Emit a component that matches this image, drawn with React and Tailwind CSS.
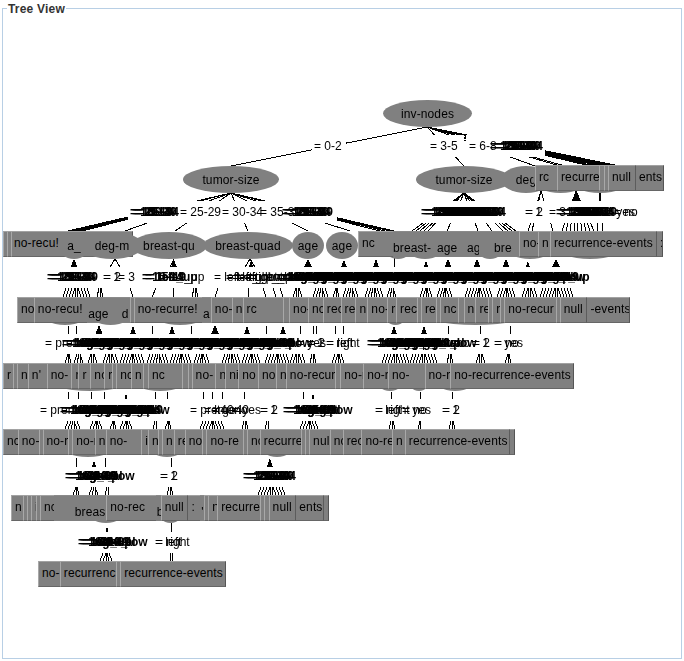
const font = { fontFamily: '"Liberation Sans", Arial, sans-serif' }

// x, text, flags: d = dark divider, e = no border (ellipse showing through), p = left padding
const rows = [
  { y: 165, end: 664, cells: [[535, 'rc'], [557, 'recurre'], [599, ''], [604, ''], [608, 'null'], [635, 'ents', { d: 1 }]] },
  { y: 231, end: 133, cells: [[3, ''], [7, ''], [10, 'no-recu!', { p: 2 }]] },
  {
    y: 297, end: 630,
    cells: [[17, 'no'], [34, 'no-recu!'], [88, 'age', { e: 1 }], [122, 'd', { e: 1 }], [131, ''], [134, 'no-recurre!'], [203, 'a', { e: 1 }], [212, 'no-'], [233, 'n'], [244, 'rc'], [285, ''], [291, 'no-'], [310, 'nc'], [325, 'rec'], [343, 're'], [358, 'n'], [370, 'no-'], [390, 'r'], [399, 'rec'], [420, ''], [424, 're'], [439, ''], [442, 'nc'], [460, ''], [466, 'n'], [478, 're'], [491, ''], [494, 'r'], [502, ''], [505, 'no-recur'], [557, ''], [559, 'null'], [586, '-events', { d: 1 }]],
  },
  {
    y: 363, end: 574,
    cells: [[3, 'r'], [13, ''], [15, 'ni'], [26, "n'"], [45, 'no-'], [70, 'r'], [77, 'r'], [89, 'nc'], [103, 'r'], [111, ''], [113, 'nc'], [128, 'n'], [140, ''], [145, 'nc'], [179, ''], [185, 'i'], [188, 'no-'], [212, 'n'], [222, 'ni'], [235, 'no'], [255, 'no-'], [273, 'n'], [283, 'no-recur'], [333, 'r'], [338, 'no-r'], [361, 'no-r'], [386, 'no-'], [423, 'no-r'], [449, 'no-recurrence-events']],
  },
  {
    y: 429, end: 515,
    cells: [[3, 'nc'], [18, 'no-'], [39, ''], [41, 'no-r'], [67, ''], [71, 'no-r'], [94, 'n'], [105, 'no-'], [141, 'i'], [148, 'n'], [158, ''], [161, 'n'], [173, 're'], [184, 'no'], [202, ''], [204, 'no-re'], [241, 'i'], [244, 'nc'], [257, 'recurre'], [299, ''], [302, ''], [306, 'null'], [327, 'no'], [340, 'rec'], [359, 'no-re'], [390, 'n'], [403, 'recurrence-events'], [509, ':', { d: 1 }]],
  },
  {
    y: 495, end: 329,
    cells: [[11, 'n'], [23, ''], [26, ''], [30, 'i'], [35, ''], [38, 'nc'], [52, 'breas', { e: 1, p: 21 }], [105, 'no-rec'], [155, 'b', { e: 1 }], [160, 'null'], [187, ':', { d: 1 }], [200, "'", { e: 1 }], [204, ''], [208, 'nc'], [217, 'recurre'], [260, ''], [263, ''], [268, 'null'], [295, 'ents', { d: 1 }], [323, '', { d: 1 }]],
  },
  { y: 561, end: 226, cells: [[38, 'no-'], [60, 'recurrenc'], [117, ''], [119, 'recurrence-events']] },
]

// ellipses: cx, y, w, h, text
const backEllipses = [
  [526, 166, 50, 27, 'deg'], [560, 166, 55, 27, ''], [600, 166, 60, 27, ''],
  [65, 297, 50, 28, ''], [110, 297, 45, 28, ''], [180, 297, 60, 28, ''], [395, 297, 25, 28, ''], [475, 297, 115, 28, ''],
  [90, 363, 90, 28, ''], [160, 363, 60, 28, ''], [390, 363, 30, 28, ''], [419, 363, 24, 28, ''], [455, 363, 44, 28, ''],
  [88, 429, 60, 28, ''], [167, 429, 40, 28, ''], [277, 429, 36, 28, ''],
  [106, 495, 40, 28, ''], [170, 495, 27, 28, ''],
  [398, 232, 30, 27, ''], [425, 232, 40, 27, ''], [490, 232, 30, 27, ''], [530, 232, 50, 27, ''], [590, 232, 70, 27, ''],
]

const frontEllipses = [
  [427.5, 100, 89, 27, 'inv-nodes'],
  [231, 166, 96, 27, 'tumor-size'],
  [464, 166, 96, 27, 'tumor-size'],
  [74, 232, 32, 27, 'a_'], [112, 232, 62, 27, 'deg-m'], [169, 232, 76, 27, 'breast-qu'], [248, 232, 90, 27, 'breast-quad'],
  [308, 232, 32, 27, 'age'], [342, 232, 32, 27, 'age'],
]

const rightRow2 = {
  y: 231, end: 663,
  cells: [[358, 'nc'], [393, 'breast-', { e: 1, p: 0 }], [433, 'age', { e: 1, p: 4 }], [463, 'ag', { e: 1, p: 4 }], [479, 'bre', { e: 1, p: 15 }], [519, 'no-'], [538, 'n'], [550, 'recurrence-events'], [656, ':', { d: 1 }]],
}

const fan = (px, py, xs, cy) => xs.map((x) => [px, py, x, cy])

// small fans of wires that come out of a label band
const spread = (x0, x1, y0, y1, step = 3) => {
  const out = []
  const cx = (x0 + x1) / 2
  for (let x = x0; x <= x1; x += step) {
    const lean = Math.max(-3, Math.min(3, (cx - x) * 0.8))
    out.push([Math.round(x + lean), y0, x, y1])
  }
  return out
}

const ticks = (xs, y0, y1) => xs.map((x) => [x, y0, x, y1])

const edges = [
  ...fan(427, 127, [231, 464, 535, 560, 565, 590, 595, 600, 603, 606, 609, 612, 615, 618, 620], 166),
  ...fan(231, 193, [68, 70, 72, 74, 76, 78, 80, 82, 125, 175, 248, 308, 350, 380, 385, 390, 394], 231),
  ...fan(464, 193, [412, 416, 420, 424, 428, 447, 478, 492, 503, 508, 512, 516], 231),
  ...fan(541, 191, [528, 532, 553], 231),
  ...fan(576, 191, [562, 566, 570, 574, 578, 582, 586, 590, 594], 231),
  ...fan(600, 191, [597, 603], 231),
  // row 2 to row 3
  ...[[63, 90], [97, 103], [343, 360], [365, 383], [387, 398], [420, 433], [437, 453], [465, 493], [497, 517], [522, 537], [540, 573], [293, 302], [313, 330], [333, 340], [192, 198]].flatMap(([a, b]) => spread(a, b, 288, 297)),
  [156, 288, 152, 297], [173, 288, 173, 297], [218, 288, 215, 297], [248, 288, 248, 297], [263, 288, 266, 297], [273, 288, 276, 297], [280, 288, 283, 297], [130, 288, 133, 297],
  // row 3 to row 4
  ...ticks([68, 76, 152, 191, 266, 300, 313, 316, 335, 343, 448, 480, 510], 326, 334),
  ...[[65, 72], [74, 85], [88, 97], [103, 118], [120, 145], [147, 170], [170, 192], [194, 210], [222, 240], [242, 262], [265, 290], [290, 305], [310, 316], [332, 345], [382, 409], [410, 437], [447, 453], [476, 485], [505, 512]].flatMap(([a, b]) => spread(a, b, 354, 363)),
  // row 4 to row 5
  ...ticks([68, 78, 91, 104, 155, 167, 203, 212, 222, 244, 303, 391, 420, 452], 392, 399),
  ...[[65, 82], [90, 103], [110, 118], [120, 133], [153, 158], [165, 173], [200, 225], [242, 248], [265, 270], [300, 320], [389, 395], [418, 422], [449, 455]].flatMap(([a, b]) => spread(a, b, 421, 429)),
  // row 5 to row 6
  ...ticks([76, 105, 171], 458, 467),
  ...[[73, 80], [89, 100], [105, 110], [167, 173], [258, 285]].flatMap(([a, b]) => spread(a, b, 487, 495)),
  // row 6 to row 7
  ...ticks([171], 523, 532),
  ...[[100, 113], [170, 173]].flatMap(([a, b]) => spread(a, b, 553, 561)),
  // open heads and single lines under row 2
  [115, 259, 110, 267], [115, 259, 120, 267], [394, 258, 394, 267],
  [174, 259, 170, 267], [250, 259, 245, 267], [250, 259, 255, 267],
]

// x, top, bottom, width
const heads = [
  [74, 259, 267, 7], [174, 260, 267, 6], [251, 261, 267, 5], [308, 259, 267, 8], [344, 260, 267, 6], [376, 259, 267, 6], [426, 261, 267, 5], [448, 259, 267, 7], [477, 259, 267, 7], [506, 259, 267, 7], [528, 261, 267, 4], [556, 259, 267, 8],
  [99, 325, 334, 7], [133, 326, 334, 6], [172, 326, 334, 6], [215, 325, 334, 8], [247, 326, 334, 6], [283, 326, 334, 6], [394, 326, 334, 6], [424, 326, 334, 6],
  [126, 393, 399, 3], [313, 393, 399, 3],
  [94, 460, 467, 4], [270, 458, 467, 6],
  [107, 526, 532, 3],
]

const eq = ['= 10-14', '= 15-19', '= left_up', '= right_low', '= central', '= 40-49', '= 30-39', '= ge40', '= left', '= right']
const nums = ['= 10-14', '= 15-19', '= 20-24', '= 25-29', '= 30-34', '= 35-39', '= 40-44', '= 45-49', '= 50-54']

// a stack of labels drawn over each other, fourth item marks it as heavy
const dense = (from, to, cy, step = 2, words = eq) => {
  const out = []
  let i = 0
  for (let x = from; x <= to; x += step) {
    out.push([x, words[i % words.length], cy, true])
    i += 1
  }
  return out
}

const labels = [
  [314, '= 0-2', 146], [430, '= 3-5', 146], [469, '= 6-8', 146],
  ...dense(490, 502, 146, 2, nums),
  ...dense(130, 138, 212, 2, nums),
  [180, '= 25-29', 212], [222, '= 30-34', 212], [260, '= 35-39', 212],
  ...dense(282, 292, 212, 2, nums),
  ...dense(421, 466, 212, 2, nums),
  [525, '= 1', 212], [526, '= 2', 212], [549, '= 3', 212],
  ...dense(556, 576, 212, 2, nums),
  [606, '= yes', 212], [614, '= no', 212],
  ...dense(47, 58, 277, 2, nums),
  [103, '= 1', 277], [104, '= 2', 277], [118, '= 3', 277],
  ...dense(142, 150, 277, 3),
  [158, '= left_up', 277],
  [214, '= left', 277], [226, '= left_up', 277], [232, '= left_low', 277], [238, '= right_up', 277], [244, '= right_low', 277], [250, '= central', 277],
  ...dense(276, 540, 277, 2),
  [45, '= premeno', 343],
  ...dense(62, 258, 343, 2),
  [297, '= yes', 343], [307, '= 1', 343], [308, '= 2', 343], [326, '= right', 343], [327, '= left', 343],
  ...dense(367, 416, 343, 2),
  [412, '= premeno', 343], [472, '= 1', 343], [473, '= 2', 343], [494, '= yes', 343], [495, '= no', 343],
  [40, '= premeno', 410],
  ...dense(60, 122, 410, 2),
  [190, '= premeno', 410], [204, '= lt40', 410], [212, '= ge40', 410], [232, '= yes', 410], [260, '= 1', 410], [261, '= 2', 410],
  ...dense(283, 302, 410, 2),
  [375, '= left', 410], [376, '= right', 410], [402, '= yes', 410], [403, '= no', 410], [442, '= 1', 410], [443, '= 2', 410],
  ...dense(65, 80, 476, 2),
  [160, '= 1', 476], [161, '= 2', 476],
  ...dense(243, 256, 476, 2, nums),
  ...dense(78, 90, 542, 2),
  [155, '= left', 542], [156, '= right', 542],
]

const bands = [
  [312, 346, 146], [428, 464, 146], [466, 545, 146],
  [128, 337, 212], [418, 632, 212],
]

function Row({ y, end, cells }) {
  return (
    <div
      className="absolute flex h-[26px] text-[12px] leading-[22px] tracking-[0.12px] text-black whitespace-nowrap"
      style={{ left: cells[0][0], top: y, width: end - cells[0][0] }}
    >
      {cells.map(([x, text, f = {}], i) => {
        const next = i + 1 < cells.length ? cells[i + 1][0] : end
        return (
          <div
            key={x}
            className={
              'overflow-hidden bg-[#808080] ' +
              (f.e ? 'pt-[5px] border-t border-t-[#8a8a8a]' : 'border-t border-b border-l border-t-[#a2a2a2] border-b-[#666666] ' + (f.d ? 'border-l-[#5c5c5c]' : 'border-l-[#a8a8a8]')) +
              (i === cells.length - 1 ? ' border-r border-r-[#555555] border-b border-b-[#555555]' : '')
            }
            style={{ width: next - x, paddingLeft: f.p ?? (f.e ? 1 : 3) }}
          >
            {text}
          </div>
        )
      })}
    </div>
  )
}

function Ellipse({ node: [cx, y, w, h, text] }) {
  return (
    <div
      className="absolute flex items-center justify-center overflow-hidden rounded-[50%] bg-[#808080] text-[12px] tracking-[0.12px] text-black whitespace-nowrap"
      style={{ left: cx - w / 2, top: y, width: w, height: h }}
    >
      {text}
    </div>
  )
}

export default function App() {
  return (
    <div className="relative h-[661px] w-[684px] overflow-hidden bg-white" style={font}>
      <div className="ml-[2px] mt-[8px] h-[651px] w-[680px] border border-[#b8cfe5]" />
      <span className="absolute left-[7px] top-[2px] bg-white px-[1px] text-[12px] font-bold leading-[14px] tracking-[0.2px] text-[#333333]">
        Tree View
      </span>

      <div className="absolute inset-0">
        <svg className="absolute inset-0" width="684" height="661" shapeRendering="crispEdges">
          {edges.map(([x1, y1, x2, y2], i) => (
            <line key={i} x1={x1} y1={y1} x2={x2} y2={y2} stroke="#000" />
          ))}
          {heads.map(([x, y0, y1, w], i) => (
            <polygon key={i} points={`${x},${y0} ${x - w / 2},${y1} ${x + w / 2},${y1}`} fill="#000" />
          ))}
        </svg>

        {bands.map(([x0, x1, cy]) => (
          <div key={`${x0}-${cy}`} className="absolute h-[22px] bg-white" style={{ left: x0, top: cy - 11, width: x1 - x0 }} />
        ))}

        <div className="absolute inset-0 will-change-transform">
          {labels.map(([x, text, cy, heavy], i) => (
            <span
              key={i}
              className={'absolute text-[12px] leading-[14px] text-black whitespace-nowrap ' + (heavy ? 'font-bold' : 'font-normal')}
              style={{ left: x, top: cy - 7 }}
            >
              {text}
            </span>
          ))}
        </div>

        {backEllipses.map((n, i) => (
          <Ellipse key={i} node={n} />
        ))}
        {rows.map((r) => (
          <Row key={r.y} {...r} />
        ))}
        <Row {...rightRow2} />
        {frontEllipses.map((n, i) => (
          <Ellipse key={i} node={n} />
        ))}
      </div>
    </div>
  )
}
